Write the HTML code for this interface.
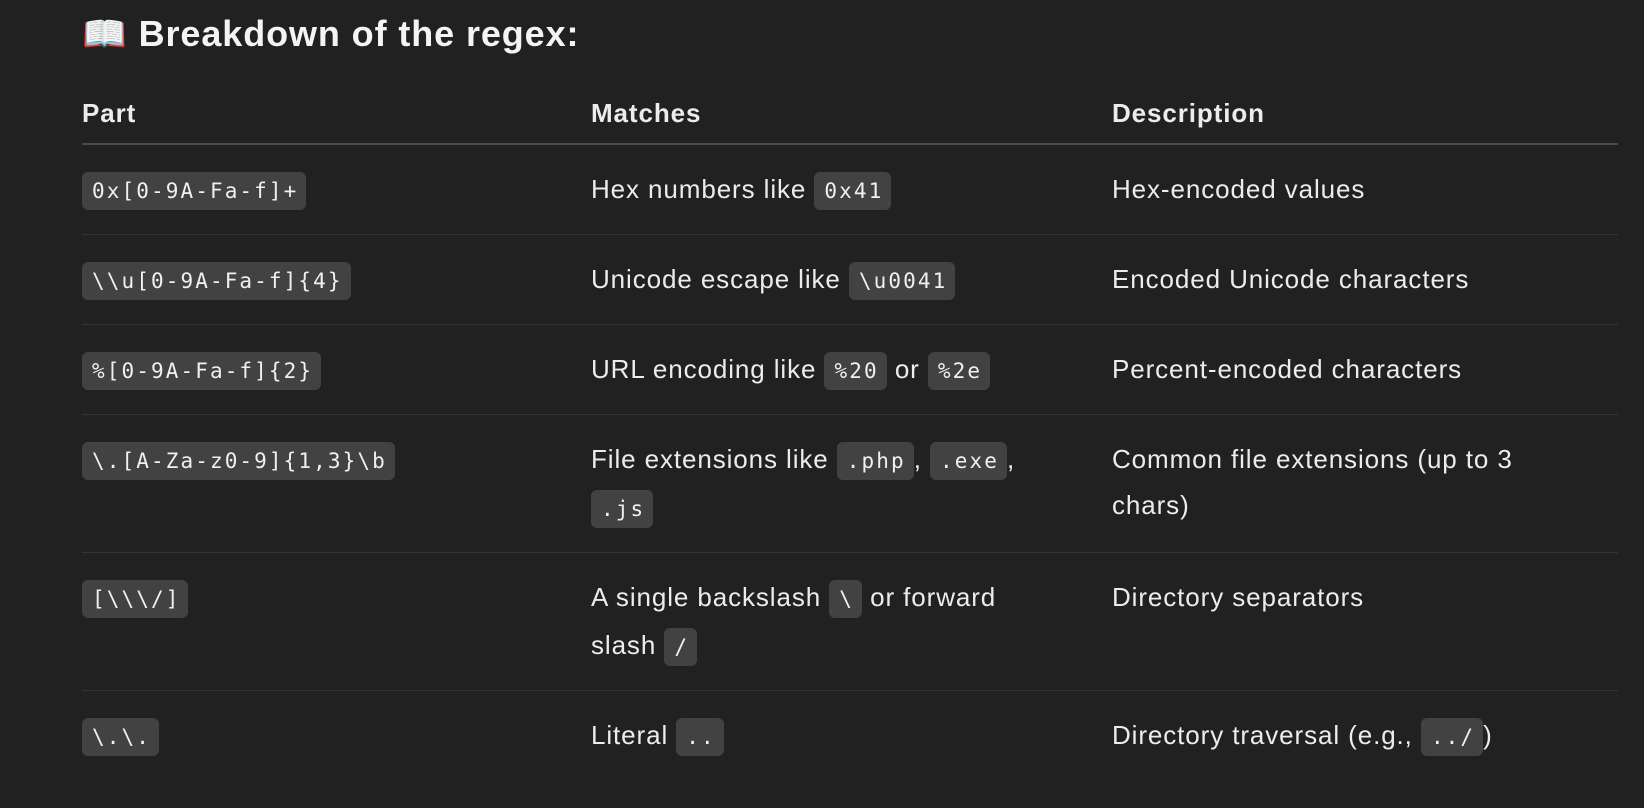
<!DOCTYPE html>
<html><head><meta charset="utf-8"><style>
html,body{margin:0;padding:0;background:#212121;width:1644px;height:808px;overflow:hidden}
body{font-family:"Liberation Sans",sans-serif;color:#ececec;}
h2{position:absolute;left:82px;top:8px;margin:0;font-size:36px;letter-spacing:0.9px;font-weight:bold;line-height:52px;color:#f4f4f4}
table{position:absolute;left:82px;top:82px;width:1536px;border-collapse:collapse;font-size:26px;letter-spacing:0.9px}
th{text-align:left;font-weight:bold;height:61px;padding:0;border-bottom:2px solid #4a4a4a;vertical-align:middle;line-height:48px}
td{padding:21px 0 20px;line-height:46px;border-bottom:1px solid #333;vertical-align:top}
tr:last-child td{border-bottom:none}
td:nth-child(1),th:nth-child(1){width:509px}
td:nth-child(2),th:nth-child(2){width:521px}
code{font-family:"DejaVu Sans Mono","Liberation Mono",monospace;font-size:21px;letter-spacing:2.1px;background:#424242;border-radius:6px;padding:7px 8px 7px 10px;color:#f0f0f0}
</style></head><body>
<h2>📖 Breakdown of the regex:</h2>
<table>
<tr><th>Part</th><th>Matches</th><th>Description</th></tr>
<tr><td><code>0x[0-9A-Fa-f]+</code></td><td>Hex numbers like <code>0x41</code></td><td>Hex-encoded values</td></tr>
<tr><td><code>\\u[0-9A-Fa-f]{4}</code></td><td>Unicode escape like <code>\u0041</code></td><td>Encoded Unicode characters</td></tr>
<tr><td><code>%[0-9A-Fa-f]{2}</code></td><td>URL encoding like <code>%20</code> or <code>%2e</code></td><td>Percent-encoded characters</td></tr>
<tr><td><code>\.[A-Za-z0-9]{1,3}\b</code></td><td>File extensions like <code>.php</code>, <code>.exe</code>,<br><code>.js</code></td><td>Common file extensions (up to 3<br>chars)</td></tr>
<tr><td><code>[\\\/]</code></td><td>A single backslash <code>\</code> or forward<br>slash <code>/</code></td><td>Directory separators</td></tr>
<tr><td><code>\.\.</code></td><td>Literal <code>..</code></td><td>Directory traversal (e.g., <code>../</code>)</td></tr>
</table>
</body></html>
